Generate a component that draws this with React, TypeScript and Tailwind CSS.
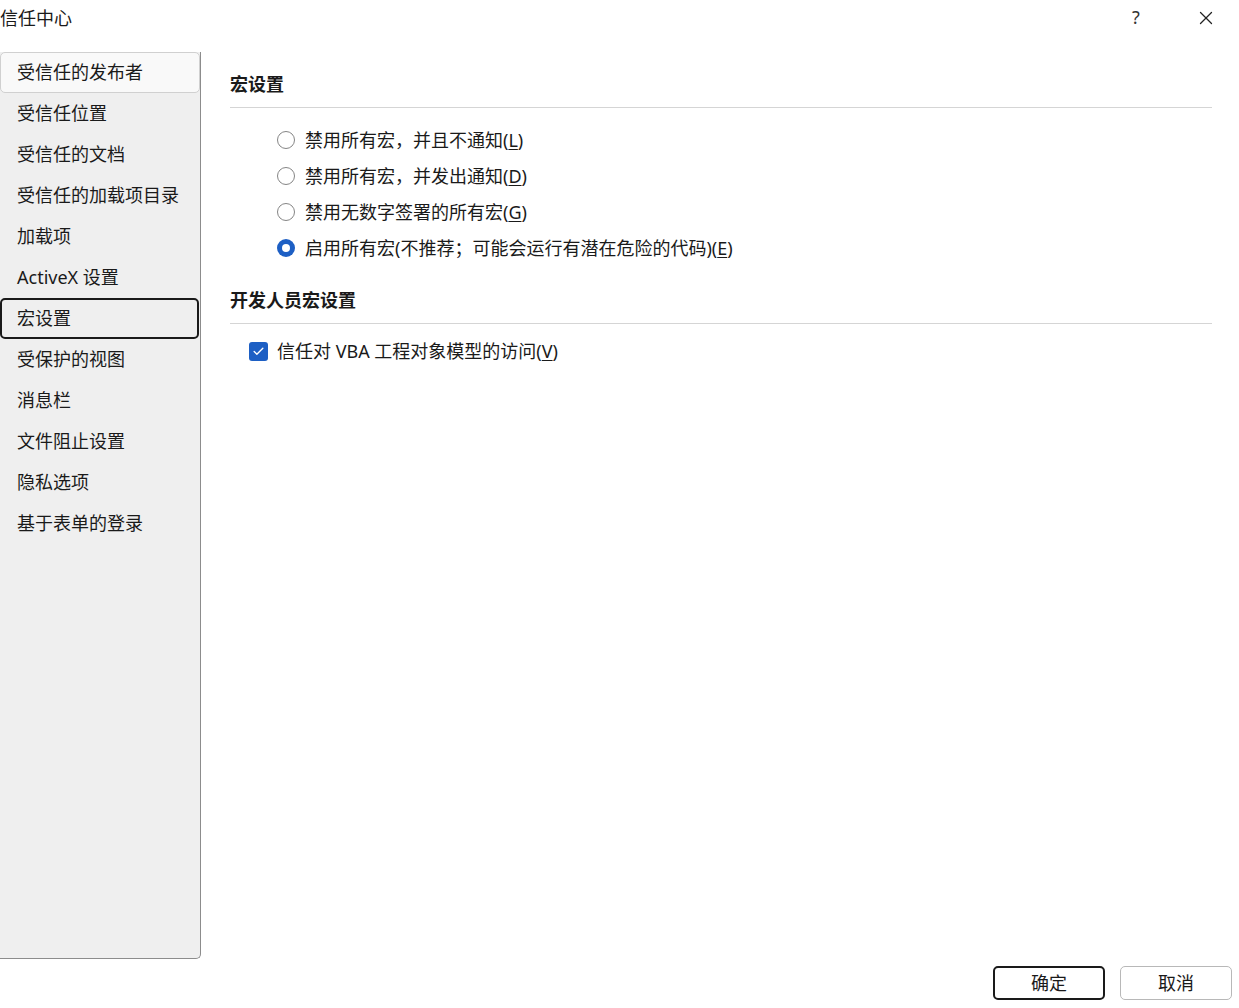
import { Check, X } from "lucide-react";

const sideItems = [
  "受信任的发布者",
  "受信任位置",
  "受信任的文档",
  "受信任的加载项目录",
  "加载项",
  "ActiveX 设置",
  "宏设置",
  "受保护的视图",
  "消息栏",
  "文件阻止设置",
  "隐私选项",
  "基于表单的登录",
];

const radios = [
  { label: "禁用所有宏，并且不通知(", key: "L", checked: false },
  { label: "禁用所有宏，并发出通知(", key: "D", checked: false },
  { label: "禁用无数字签署的所有宏(", key: "G", checked: false },
  { label: "启用所有宏(不推荐；可能会运行有潜在危险的代码)(", key: "E", checked: true },
];

function Radio({ checked }: { checked: boolean }) {
  if (checked) {
    return (
      <span className="w-[18px] h-[18px] rounded-full bg-[#1d5fc4] flex items-center justify-center">
        <span className="w-[8px] h-[8px] rounded-full bg-white" />
      </span>
    );
  }
  return <span className="w-[18px] h-[18px] rounded-full border-[1.5px] border-[#858585] bg-white" />;
}

export default function App() {
  return (
    <div className="w-[1239px] h-[1008px] bg-white flex flex-col text-[#1a1a1a] font-['Segoe_UI','Noto_Sans','Noto_Sans_CJK_SC',sans-serif] overflow-hidden">
      {/* title bar */}
      <div className="h-[52px] flex items-start">
        <div className="h-[35px] flex items-center text-[18px] leading-none">信任中心</div>
        <div className="flex-1" />
        <div className="h-[35px] w-[74px] flex items-center justify-center text-[18px] text-[#333]">?</div>
        <div className="h-[35px] w-[66px] flex items-center justify-center">
          <X className="w-[22px] h-[22px] text-[#222]" strokeWidth={1.4} />
        </div>
      </div>

      <div className="flex h-[907px]">
        {/* sidebar */}
        <div className="w-[201px] bg-[#efefef] border-r border-b border-[#8c8c8c] rounded-br-[5px] flex flex-col">
          {sideItems.map((item, i) => (
            <div
              key={item}
              className={
                "h-[41px] flex items-center text-[18px] " +
                (i === 0
                  ? "bg-[#f9f9f9] border border-[#d0d0d0] rounded-[5px] pl-[16px]"
                  : i === 6
                  ? "border-2 border-[#1a1a1a] rounded-[5px] pl-[15px] mr-[1px]"
                  : "pl-[17px]")
              }
            >
              {item}
            </div>
          ))}
        </div>

        {/* content */}
        <div className="flex-1 pl-[29px] pr-[27px] pt-[20px] flex flex-col">
          <div className="border-b border-[#d5d5d5] pb-[11px]">
            <div className="h-[24px] flex items-center text-[18px] font-bold">宏设置</div>
          </div>
          <div className="mt-[14px] flex flex-col pl-[47px]">
            {radios.map((r) => (
              <div key={r.key} className="h-[36px] flex items-center gap-[10px]">
                <Radio checked={r.checked} />
                <span className="text-[18px]">
                  {r.label}
                  <span className="underline underline-offset-2">{r.key}</span>)
                </span>
              </div>
            ))}
          </div>

          <div className="mt-[22px] border-b border-[#d5d5d5] pb-[11px]">
            <div className="h-[24px] flex items-center text-[18px] font-bold">开发人员宏设置</div>
          </div>
          <div className="mt-[9px] pl-[19px] h-[36px] flex items-center gap-[9px]">
            <span className="w-[19px] h-[19px] rounded-[3px] bg-[#1d5fc4] flex items-center justify-center">
              <Check className="w-[13px] h-[13px] text-white" strokeWidth={2.5} />
            </span>
            <span className="text-[18px]">
              信任对 VBA 工程对象模型的访问(<span className="underline underline-offset-2">V</span>)
            </span>
          </div>
        </div>
      </div>

      {/* footer */}
      <div className="flex justify-end gap-[15px] pr-[7px] mt-[7px]">
        <button className="w-[112px] h-[34px] border-2 border-[#1a1a1a] rounded-[5px] text-[18px] bg-white flex items-center justify-center">
          确定
        </button>
        <button className="w-[112px] h-[34px] border border-[#b8b8b8] rounded-[5px] text-[18px] bg-white flex items-center justify-center">
          取消
        </button>
      </div>
    </div>
  );
}
